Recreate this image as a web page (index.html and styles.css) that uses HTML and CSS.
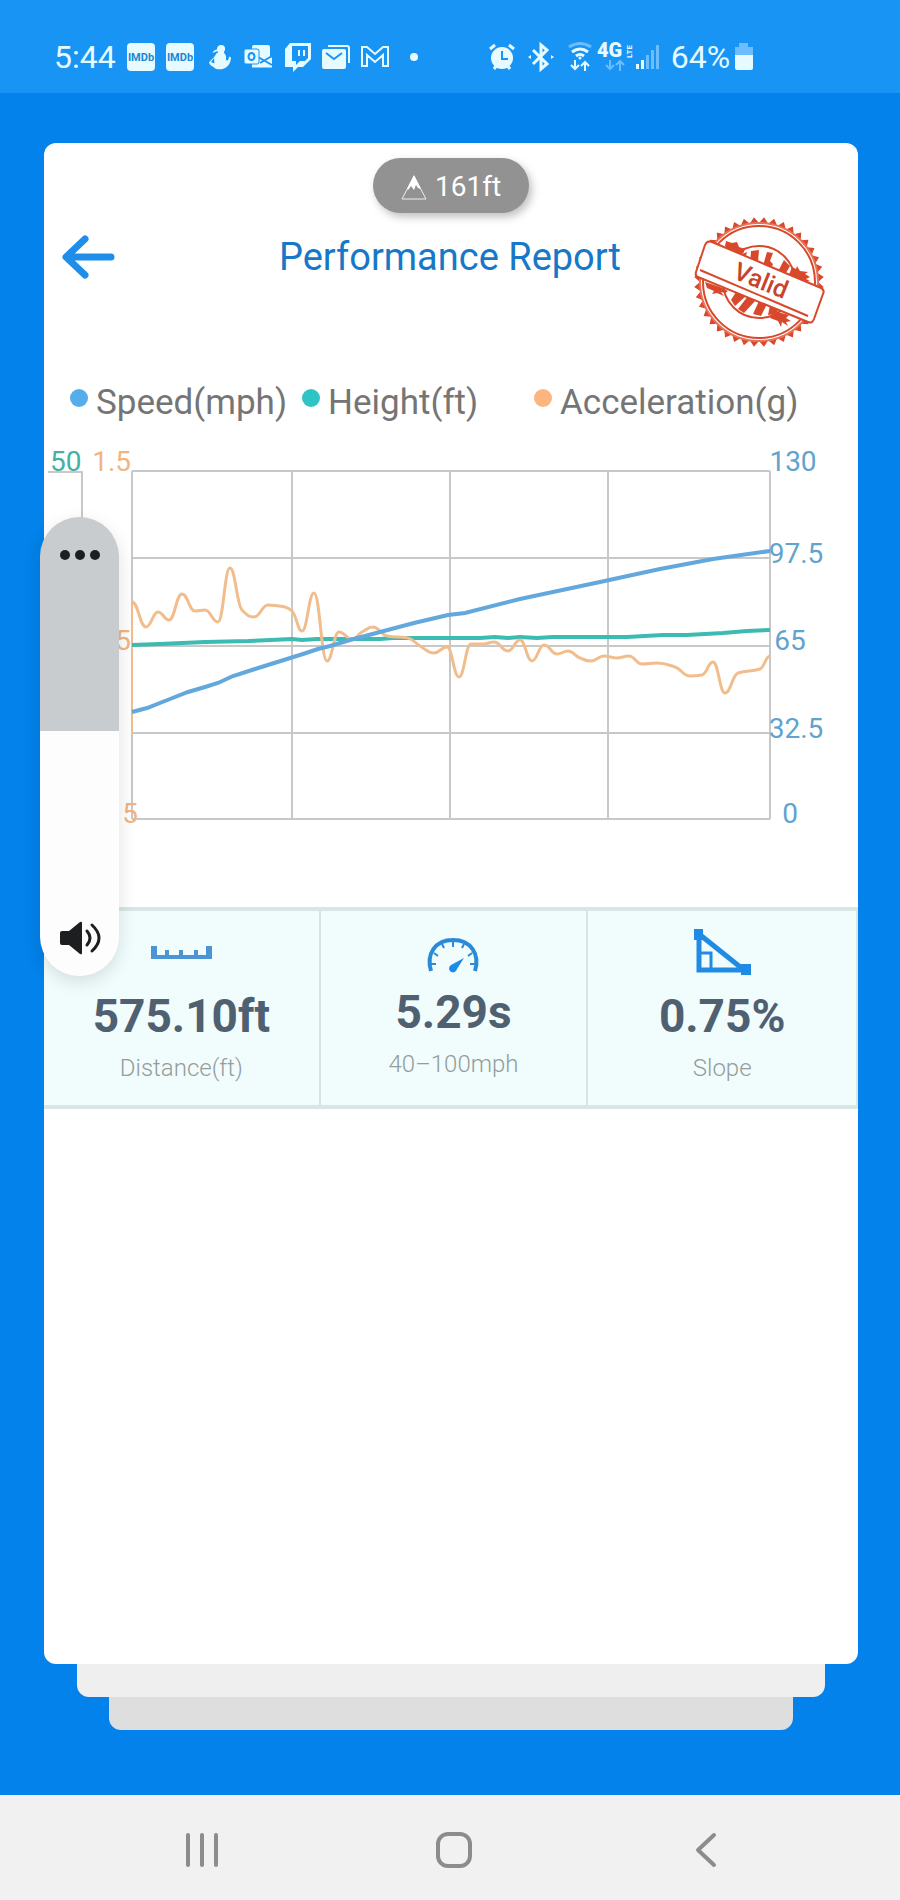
FILE: index.html
```
<!DOCTYPE html>
<html lang="en">
    <head>
        <meta charset="UTF-8" />
        <meta name="viewport" content="width=device-width, initial-scale=1.0" />
        <title>Performance Report</title>
        <link rel="stylesheet" href="styles.css">
    </head>
    <body>
        <header class="status-bar">
            <span class="status-text">5:44</span>
            <svg class="status-icon" viewBox="0 0 28 28">
                <rect width="28" height="28" rx="4" />
                <text class="imdb" x="14" y="18">IMDb</text>
            </svg>
            <svg class="status-icon" viewBox="0 0 28 28">
                <rect width="28" height="28" rx="4" />
                <text class="imdb" x="14" y="18">IMDb</text>
            </svg>
            <svg class="status-icon" viewBox="0 0 28 28">
                <path d="M16 2c3 0 4.500 2 4 4.500c-.3 1.500-1 2-1 3.500c2 1.500 2.500 4 2 7c1 .8 2 .6 2.500-1l.8-2.500l1.700 1c-.2 5-2.500 9-7 11c-4 1.500-9 1-10.500-1.500c-2-1-4-2.500-4.500-4.500c2-3 5-4.500 6.500-7.500c.6-1.500 1.500-2 2.500-2.200l-.5-1.800l-5 2c.5-2 2-3 4.500-3.500c0-3 1.500-4.500 4-4.500z" />
                <path class="cut" d="M9 15l-3 4l3.500 1.500z" />
            </svg>
            <svg class="status-icon" viewBox="0 0 28 28">
                <rect x="8" y="2" width="18" height="16" rx="2" />
                <path d="M8 14h18l2 .5v10h-20z" />
                <path class="cut-line" d="M14 14l14 8M16 20l12-7" />
                <rect class="outlined" x="0" y="6" width="15" height="15" rx="2" />
                <ellipse class="cut-line" cx="7.500" cy="13.500" rx="3" ry="3.500" />
            </svg>
            <svg class="status-icon" viewBox="0 0 28 28">
                <path fill-rule="evenodd" d="M7 0h21v16l-8 8h-5l-5 5v-5H2V6zM9 3v15h4v4l4-4h5l3-3V3z" />
                <path d="M15 7h2v6h-2zM20 7h2v6h-2z" />
            </svg>
            <svg class="status-icon" viewBox="0 0 28 28">
                <path class="line" d="M6 3h19q2 0 2 2v15" />
                <rect y="6" width="24" height="20" rx="2" />
                <path class="cut-line" d="M4 10l8 6l8-6" />
            </svg>
            <svg class="status-icon" viewBox="0 0 28 28">
                <path class="line" d="M1 4h5l8 7l8-7h5v19h-5V12l-8 7l-8-7v11H1z" />
            </svg>
            <svg class="status-icon" viewBox="0 0 28 28">
                <circle cx="14" cy="14" r="4" />
            </svg>

            <div class="status-right">
                <svg class="status-icon" viewBox="0 0 28 28">
                    <circle cx="14" cy="15" r="11" />
                    <path class="thick" d="M2 6l5-4M26 6l-5-4M6 26l3-4M22 26l-3-4" />
                    <path class="cut-line" d="M14 8v8h6" />
                </svg>
                <svg class="status-icon" viewBox="0 0 28 28">
                    <path class="thick" d="M6 7l14 14l-6 5V2l6 5L6 21" />
                    <path d="M1 14l3-2v4zM27 14l-3-2v4z" />
                </svg>
                <div class="signals">
                    <svg class="status-icon" viewBox="0 0 28 28">
                        <path class="thick faded" d="M3 4q11-7 22 0" />
                        <path class="thick" d="M6 9q8-6 16 0M10 13q4-3 8 0" />
                        <circle cx="14" cy="15" r="1.500" />
                        <path class="line" d="M9 17v9M5 22l4 4l4-4M19 28v-9M15 23l4-4l4 4" />
                    </svg>
                    <svg class="status-icon network" viewBox="0 0 34 28">
                        <text class="net-name" x="-1" y="14">4G</text>
                        <text class="net-type" transform="translate(34 15) rotate(-90)">LTE</text>
                        <path class="line faded" d="M12 17v9M8 22l4 4l4-4M22 28v-9M18 22l4-4l4 4" />
                    </svg>
                    <svg class="status-icon bars" viewBox="0 0 24 28">
                        <path d="M0 21h3v5H0zM5 17h3v9H5z" />
                        <path class="faded-fill" d="M10 12h3v14h-3zM15 7h3v19h-3zM20 2h3v24h-3z" />
                    </svg>
                </div>
                <div class="signals">
                    <span class="status-text">64%</span>
                    <svg class="status-icon battery" viewBox="0 0 20 28">
                        <path class="faded-fill" d="M5 0h9v4h5v8H1V4h4z" />
                        <path d="M1 12h18v13q0 2-2 2H3q-2 0-2-2z" />
                    </svg>
                </div>
            </div>
        </header>

        <main>
            <section class="card">
                <div class="altitude">
                    <svg width="26" height="28" viewBox="0 0 26 28">
                        <path class="peak-line" d="M13 3L1 26h24z" />
                        <path class="peak-snow" d="M13 2l7 14l-3-1l-2-3l-2 5l-3-4l-3 4l-1-1z" />
                    </svg>
                    <span>161ft</span>
                </div>

                <div class="report-head">
                    <button class="back" type="button" aria-label="Back">
                        <svg width="54" height="44" viewBox="0 0 54 44">
                            <path d="M23 4L4 22l19 18M5 22h44" />
                        </svg>
                    </button>
                    <h1>Performance Report</h1>
                    <svg class="stamp" viewBox="0 0 132 128">
                        <path id="stampTeeth" class="stamp-fill" />
                        <circle class="stamp-back" cx="65" cy="65" r="59" />
                        <circle class="stamp-ring" cx="65" cy="65" r="56" />
                        <circle class="stamp-ring" cx="65" cy="65" r="36" />
                        <path class="stamp-fill" d="M57 34l8-1l-1 12l2 8l-10-4zM73 35l6 1l-3 8l3 3l-4 9l-7-4zM90 43l6 6l-8 14l-7-3zM46 38l7-3l-2 8l-6 1zM42 75l10 4l-11 10l-4-6zM54 79l8 4l-12 13l-6-4zM65 84l8 3l-6 12l-8-2zM76 88l7 3l1 6l-10 1z" />
                        <path class="stamp-fill" d="M32 24l6 2l5-1l2 5l6 2l-2 5l-14-3l-4-5zM98 50l4 2l1-3l3 5l8 1l-3 2l5 3l-4 2l4 2l-9 2l-13-6zM11 65l15 5l8 4l-3 2l-4-1l3 4l-7-3l-5 1l2-3l-7-3zM80 94l15 4l-3 3l5 3l-5 1l2 4l-6-4l-1 5l-3-6l-8-3z" />
                        <path class="stamp-banner" d="M18 25l109 46q4 2 2 6l-9 25q-2 5-6 3L4 60q-3-1-2-5l9-27q2-5 7-3z" />
                        <path class="stamp-ring" d="M6 53l108 46" />
                        <text class="stamp-text" transform="translate(38 61) rotate(22)">Valid</text>
                    </svg>
                </div>

                <ul class="legend">
                    <li class="speed">Speed(mph)</li>
                    <li class="height">Height(ft)</li>
                    <li class="accel">Acceleration(g)</li>
                </ul>

                <svg class="chart" viewBox="0 0 814 477">
                    <path class="grid" d="M88 41H726M88 128H726M88 216H726M88 303H726M88 389H726" />
                    <path class="grid" d="M88 41V389M248 41V389M406 41V389M564 41V389M726 41V389" />
                    <path class="grid" d="M4 42H38V389" />
                    <path class="accel-axis" d="M88 172V303" />

                    <path id="heightLine" class="height-line" />
                    <path id="accelLine" class="accel-line" />
                    <path id="speedLine" class="speed-line" />

                    <text class="height-label" x="6" y="41">50</text>
                    <g class="accel-label">
                        <text x="87" y="41">1.5</text>
                        <text x="87" y="220">5</text>
                        <text x="94" y="393">5</text>
                    </g>
                    <g class="speed-label">
                        <text x="749" y="41">130</text>
                        <text x="752" y="133">97.5</text>
                        <text x="746" y="220">65</text>
                        <text x="752" y="308">32.5</text>
                        <text x="746" y="393">0</text>
                    </g>
                </svg>

                <div class="stats">
                    <div class="stat">
                        <svg width="64" height="64" viewBox="0 0 64 64">
                            <path class="ruler" d="M2 26h6v9h8v-5h4v5h10v-5h4v5h11v-5h4v5h8v-9h6v13H2z" />
                        </svg>
                        <strong>575.10ft</strong>
                        <span>Distance(ft)</span>
                    </div>
                    <div class="stat">
                        <svg width="64" height="60" viewBox="0 0 64 60">
                            <path class="gauge-arc" d="M10 51C5 34 14 20 32 20S59 34 54 51" />
                            <path class="gauge-ticks" d="M32 22v5M21 24l2 4M43 24l-2 4M13 33l4 3M51 33l-4 3M9 44h6M55 44h-6" />
                            <path class="gauge-hand" d="M43 38L36 49a4 4 0 1 1-6-4z" />
                        </svg>
                        <strong>5.29s</strong>
                        <span>40–100mph</span>
                    </div>
                    <div class="stat">
                        <svg width="64" height="64" viewBox="0 0 64 64">
                            <path class="slope" d="M9 14V50H54z" />
                            <path class="slope-corner" d="M9 33H21V50" />
                            <path class="slope-dot" d="M4 9h9v11H4zM51 44h10v11H51z" />
                        </svg>
                        <strong>0.75%</strong>
                        <span>Slope</span>
                    </div>
                </div>
            </section>
            <div class="layer layer-middle"></div>
            <div class="layer layer-last"></div>
        </main>

        <nav class="nav-bar">
            <button type="button" aria-label="Recent apps">
                <svg width="40" height="40" viewBox="0 0 40 40">
                    <path d="M6 5v30M20 5v30M34 5v30" />
                </svg>
            </button>
            <button type="button" aria-label="Home">
                <svg width="40" height="40" viewBox="0 0 40 40">
                    <rect x="4" y="4" width="32" height="32" rx="10" />
                </svg>
            </button>
            <button type="button" aria-label="Back">
                <svg width="40" height="40" viewBox="0 0 40 40">
                    <path d="M28 5L12 20l16 15" />
                </svg>
            </button>
        </nav>

        <div class="volume">
            <button class="volume-more" type="button" aria-label="More">
                <svg width="42" height="12" viewBox="0 0 42 12">
                    <circle cx="6" cy="6" r="5" />
                    <circle cx="21" cy="6" r="5" />
                    <circle cx="36" cy="6" r="5" />
                </svg>
            </button>
            <input type="range" min="0" max="100" value="53" aria-label="Volume" />
            <button class="volume-mute" type="button" aria-label="Mute">
                <svg width="42" height="34" viewBox="0 0 42 34">
                    <path d="M3 10h7L21 1q2-1 2 1v30q0 2-2 1L10 24H3q-2 0-2-2V12q0-2 2-2z" />
                    <path class="waves" d="M28 10q6 7 0 14M33 4q14 13 0 26" />
                </svg>
            </button>
        </div>

        <script>
            const speed = [
                [88, 282], [103, 278], [126, 269], [144, 262], [161, 257], [174, 253], [189, 246], [211, 239],
                [243, 229], [259, 224], [274, 219], [286, 216], [306, 210], [336, 202], [370, 193], [404, 185],
                [421, 183], [476, 169], [556, 152], [616, 139], [669, 129], [726, 121],
            ];
            const height = [
                [88, 215], [116, 214], [161, 212], [204, 211], [248, 209], [258, 210], [273, 209], [336, 209],
                [349, 208], [436, 208], [451, 207], [464, 208], [476, 207], [493, 208], [509, 207], [583, 207],
                [619, 205], [643, 205], [679, 203], [703, 201], [726, 200],
            ];
            const accel = [
                [88, 172], [102, 197], [114, 182], [125, 190], [138, 164], [151, 181], [161, 180], [174, 192],
                [186, 138], [198, 180], [210, 187], [224, 175], [241, 177], [248, 181], [258, 201], [270, 163],
                [283, 231], [295, 202], [308, 209], [318, 202], [329, 197], [343, 206], [364, 208], [376, 216],
                [390, 223], [403, 217], [415, 247], [427, 214], [439, 214], [450, 212], [464, 221], [476, 210],
                [488, 231], [500, 215], [513, 224], [524, 221], [536, 228], [547, 231], [560, 226], [573, 228],
                [585, 226], [598, 234], [613, 233], [631, 237], [646, 246], [658, 245], [669, 232], [681, 263],
                [694, 243], [716, 239], [726, 226],
            ];

            // flat at peaks and dips, average slope everywhere else
            const slopeAt = (points, i) => {
                const prev = points[i - 1];
                const next = points[i + 1];
                if (!prev || !next) return 0;
                const before = (points[i][1] - prev[1]) / (points[i][0] - prev[0]);
                const after = (next[1] - points[i][1]) / (next[0] - points[i][0]);
                return before * after <= 0 ? 0 : (2 * before * after) / (before + after);
            };

            const smoothPath = (points) => {
                let d = `M${points[0]}`;
                for (let i = 1; i < points.length; i++) {
                    const [x0, y0] = points[i - 1];
                    const [x1, y1] = points[i];
                    const step = (x1 - x0) * 0.45;
                    d += `C${x0 + step},${y0 + step * slopeAt(points, i - 1)} `;
                    d += `${x1 - step},${y1 - step * slopeAt(points, i)} ${x1},${y1}`;
                }
                return d;
            };

            const teeth = () => {
                const count = 40;
                const points = [];
                for (let i = 0; i < count * 2; i++) {
                    const angle = (Math.PI * i) / count;
                    const radius = i % 2 ? 65 : 59;
                    points.push(`${65 + radius * Math.cos(angle)},${65 + radius * Math.sin(angle)}`);
                }
                return `M${points.join("L")}Z`;
            };

            document.getElementById("heightLine").setAttribute("d", `M${height.join("L")}`);
            document.getElementById("speedLine").setAttribute("d", `M${speed.join("L")}`);
            document.getElementById("accelLine").setAttribute("d", smoothPath(accel));
            document.getElementById("stampTeeth").setAttribute("d", teeth());
        </script>
    </body>
</html>
```
FILE: styles.css
```
* {
    padding: 0;
    margin: 0;
    box-sizing: border-box;
}
body {
    min-height: 100vh;
    display: flex;
    flex-direction: column;
    position: relative;
    background-color: #0282ea;
    font-family: Roboto, "Liberation Sans", sans-serif;
}
button {
    border: none;
    background: none;
    cursor: pointer;
}
svg {
    display: block;
    flex-shrink: 0;
}

/* status bar */
.status-bar {
    height: 93px;
    padding: 21px 54px 0;
    display: flex;
    align-items: center;
    gap: 11px;
    background-color: #1894f5;
}
.status-text {
    color: #e6fbff;
    font-size: 32px;
    line-height: 40px;
}
.status-icon {
    width: 28px;
    height: 28px;
    overflow: visible;
    fill: #e6fbff;
}
.status-right {
    display: flex;
    align-items: center;
    gap: 11px;
    margin-left: 49px;
}
.signals {
    display: flex;
    align-items: center;
    gap: 4px;
}
.network {
    width: 34px;
}
.bars {
    width: 24px;
}
.battery {
    width: 20px;
}
.status-icon .cut {
    fill: #1894f5;
}
.status-icon .cut-line {
    fill: none;
    stroke: #1894f5;
    stroke-width: 2;
}
.status-icon .outlined {
    stroke: #1894f5;
    stroke-width: 1;
}
.status-icon .line {
    fill: none;
    stroke: #e6fbff;
    stroke-width: 2;
}
.status-icon .thick {
    fill: none;
    stroke: #e6fbff;
    stroke-width: 3;
}
.status-icon .faded {
    stroke: #6dbcfb;
}
.status-icon .faded-fill {
    fill: #6dbcfb;
}
.imdb {
    fill: #1c86d6;
    font-size: 11px;
    font-weight: 700;
    text-anchor: middle;
}
.net-name {
    font-size: 20px;
    font-weight: 900;
}
.net-type {
    font-size: 8px;
    font-weight: 700;
}

/* stacked cards */
main {
    flex: 1;
    padding: 50px 42px 65px 44px;
    display: flex;
    flex-direction: column;
}
.card {
    flex: 1;
    position: relative;
    border-radius: 12px;
    background-color: #fff;
}
.layer {
    height: 33px;
    border-radius: 0 0 12px 12px;
}
.layer-middle {
    margin: 0 33px;
    background-color: #efefef;
}
.layer-last {
    margin: 0 65px;
    background-color: #dddedd;
}

.altitude {
    position: absolute;
    top: 15px;
    left: 50%;
    transform: translateX(-50%);
    width: 156px;
    height: 55px;
    padding-top: 2px;
    display: flex;
    align-items: center;
    justify-content: center;
    gap: 8px;
    border-radius: 28px;
    background-color: #929292;
    box-shadow: 3px 4px 8px rgba(0, 0, 0, 0.25);
    color: #fff;
    font-size: 28px;
}
.peak-line {
    fill: none;
    stroke: #eee;
    stroke-width: 1;
}
.peak-snow {
    fill: #fff;
}

.report-head {
    padding: 74px 32px 0 18px;
    display: grid;
    grid-template-columns: 144px 1fr 132px;
    align-items: start;
}
.report-head h1 {
    color: #1878c8;
    font-size: 38px;
    font-weight: 400;
    line-height: 80px;
    text-align: center;
    white-space: nowrap;
}
.back {
    width: 54px;
    height: 80px;
    display: flex;
    align-items: center;
}
.back path {
    fill: none;
    stroke: #1e8eea;
    stroke-width: 7;
    stroke-linecap: round;
    stroke-linejoin: round;
}
.stamp {
    width: 132px;
    height: 128px;
    overflow: visible;
}
.stamp-fill {
    fill: #d8492c;
}
.stamp-back {
    fill: #fff;
    stroke: #e8735a;
    stroke-width: 2;
}
.stamp-ring {
    fill: none;
    stroke: #d8492c;
    stroke-width: 2;
}
.stamp-banner {
    fill: #fff;
    stroke: #d8492c;
    stroke-width: 2;
}
.stamp-text {
    fill: #c8432c;
    font-size: 25px;
    font-weight: 500;
}

.legend {
    margin-top: 35px;
    padding: 0 92px 0 26px;
    display: grid;
    grid-template-columns: repeat(3, 1fr);
    list-style: none;
    color: #757575;
    font-size: 35px;
    line-height: 46px;
    white-space: nowrap;
}
.legend li {
    width: 0;
    display: flex;
    gap: 8px;
}
.legend li::before {
    content: "";
    width: 18px;
    height: 18px;
    margin-top: 9px;
    flex-shrink: 0;
    border-radius: 50%;
}
.legend .speed::before {
    background-color: #55aeea;
}
.legend .height::before {
    background-color: #2ec4c6;
}
.legend .accel::before {
    background-color: #fcb57f;
}

/* chart */
.chart {
    width: 100%;
    margin-top: 4px;
    font-size: 28px;
}
.grid {
    fill: none;
    stroke: #c8c8c8;
    stroke-width: 2;
}
.accel-axis,
.accel-line {
    fill: none;
    stroke: #f2bd8c;
    stroke-width: 3;
}
.accel-axis {
    stroke-width: 2;
}
.height-line {
    fill: none;
    stroke: #3dbab2;
    stroke-width: 4;
}
.speed-line {
    fill: none;
    stroke: #62a8dc;
    stroke-width: 4;
}
.height-label {
    fill: #45b0a4;
}
.accel-label {
    fill: #f0b583;
    text-anchor: end;
}
.speed-label {
    fill: #62a3cd;
    text-anchor: middle;
}

/* totals */
.stats {
    display: grid;
    grid-template-columns: 277fr 268fr 268fr;
    border: 4px solid #d8e6e6;
    border-width: 4px 2px 4px 0;
    background-color: #f1fcfd;
}
.stat {
    height: 194px;
    padding-top: 9px;
    display: flex;
    flex-direction: column;
    align-items: center;
    border-right: 2px solid #d8e3e4;
}
.stat:last-child {
    border-right: none;
}
.stat strong {
    color: #4f6070;
    font-size: 46px;
    line-height: 64px;
}
.stat span {
    color: #949c9c;
    font-size: 24px;
    font-weight: 300;
    line-height: 40px;
}
.ruler {
    fill: #4d94d4;
}
.gauge-arc,
.gauge-ticks {
    fill: none;
    stroke: #2a8ad8;
    stroke-width: 4;
}
.gauge-ticks {
    stroke-width: 2;
}
.gauge-hand,
.slope-dot {
    fill: #1f8be4;
}
.slope {
    fill: none;
    stroke: #1f8be4;
    stroke-width: 5;
}
.slope-corner {
    fill: none;
    stroke: #1f8be4;
    stroke-width: 3;
}

/* volume panel lies over the page */
.volume {
    position: absolute;
    top: 517px;
    left: 40px;
    width: 79px;
    height: 459px;
    display: flex;
    flex-direction: column;
    align-items: center;
    border-radius: 40px;
    background: linear-gradient(#c9cccf 214px, #fdfdfd 214px);
    box-shadow: 0 6px 18px rgba(0, 0, 0, 0.12);
    fill: #1c1e20;
}
.volume button {
    width: 100%;
    height: 76px;
    display: flex;
    align-items: center;
    justify-content: center;
}
.volume input {
    flex: 1;
    width: 79px;
    min-height: 0;
    appearance: none;
    background: none;
    writing-mode: vertical-lr;
    direction: rtl;
}
.volume input::-webkit-slider-thumb {
    appearance: none;
    width: 79px;
    height: 1px;
}
.waves {
    fill: none;
    stroke: #1c1e20;
    stroke-width: 3;
    stroke-linecap: round;
}

/* system navigation */
.nav-bar {
    height: 105px;
    padding: 5px 68px 0 76px;
    display: grid;
    grid-template-columns: repeat(3, 1fr);
    align-items: center;
    justify-items: center;
    background-color: #f1f1f1;
}
.nav-bar path,
.nav-bar rect {
    fill: none;
    stroke: #8c8c8c;
    stroke-width: 4;
    stroke-linecap: round;
    stroke-linejoin: round;
}
```
